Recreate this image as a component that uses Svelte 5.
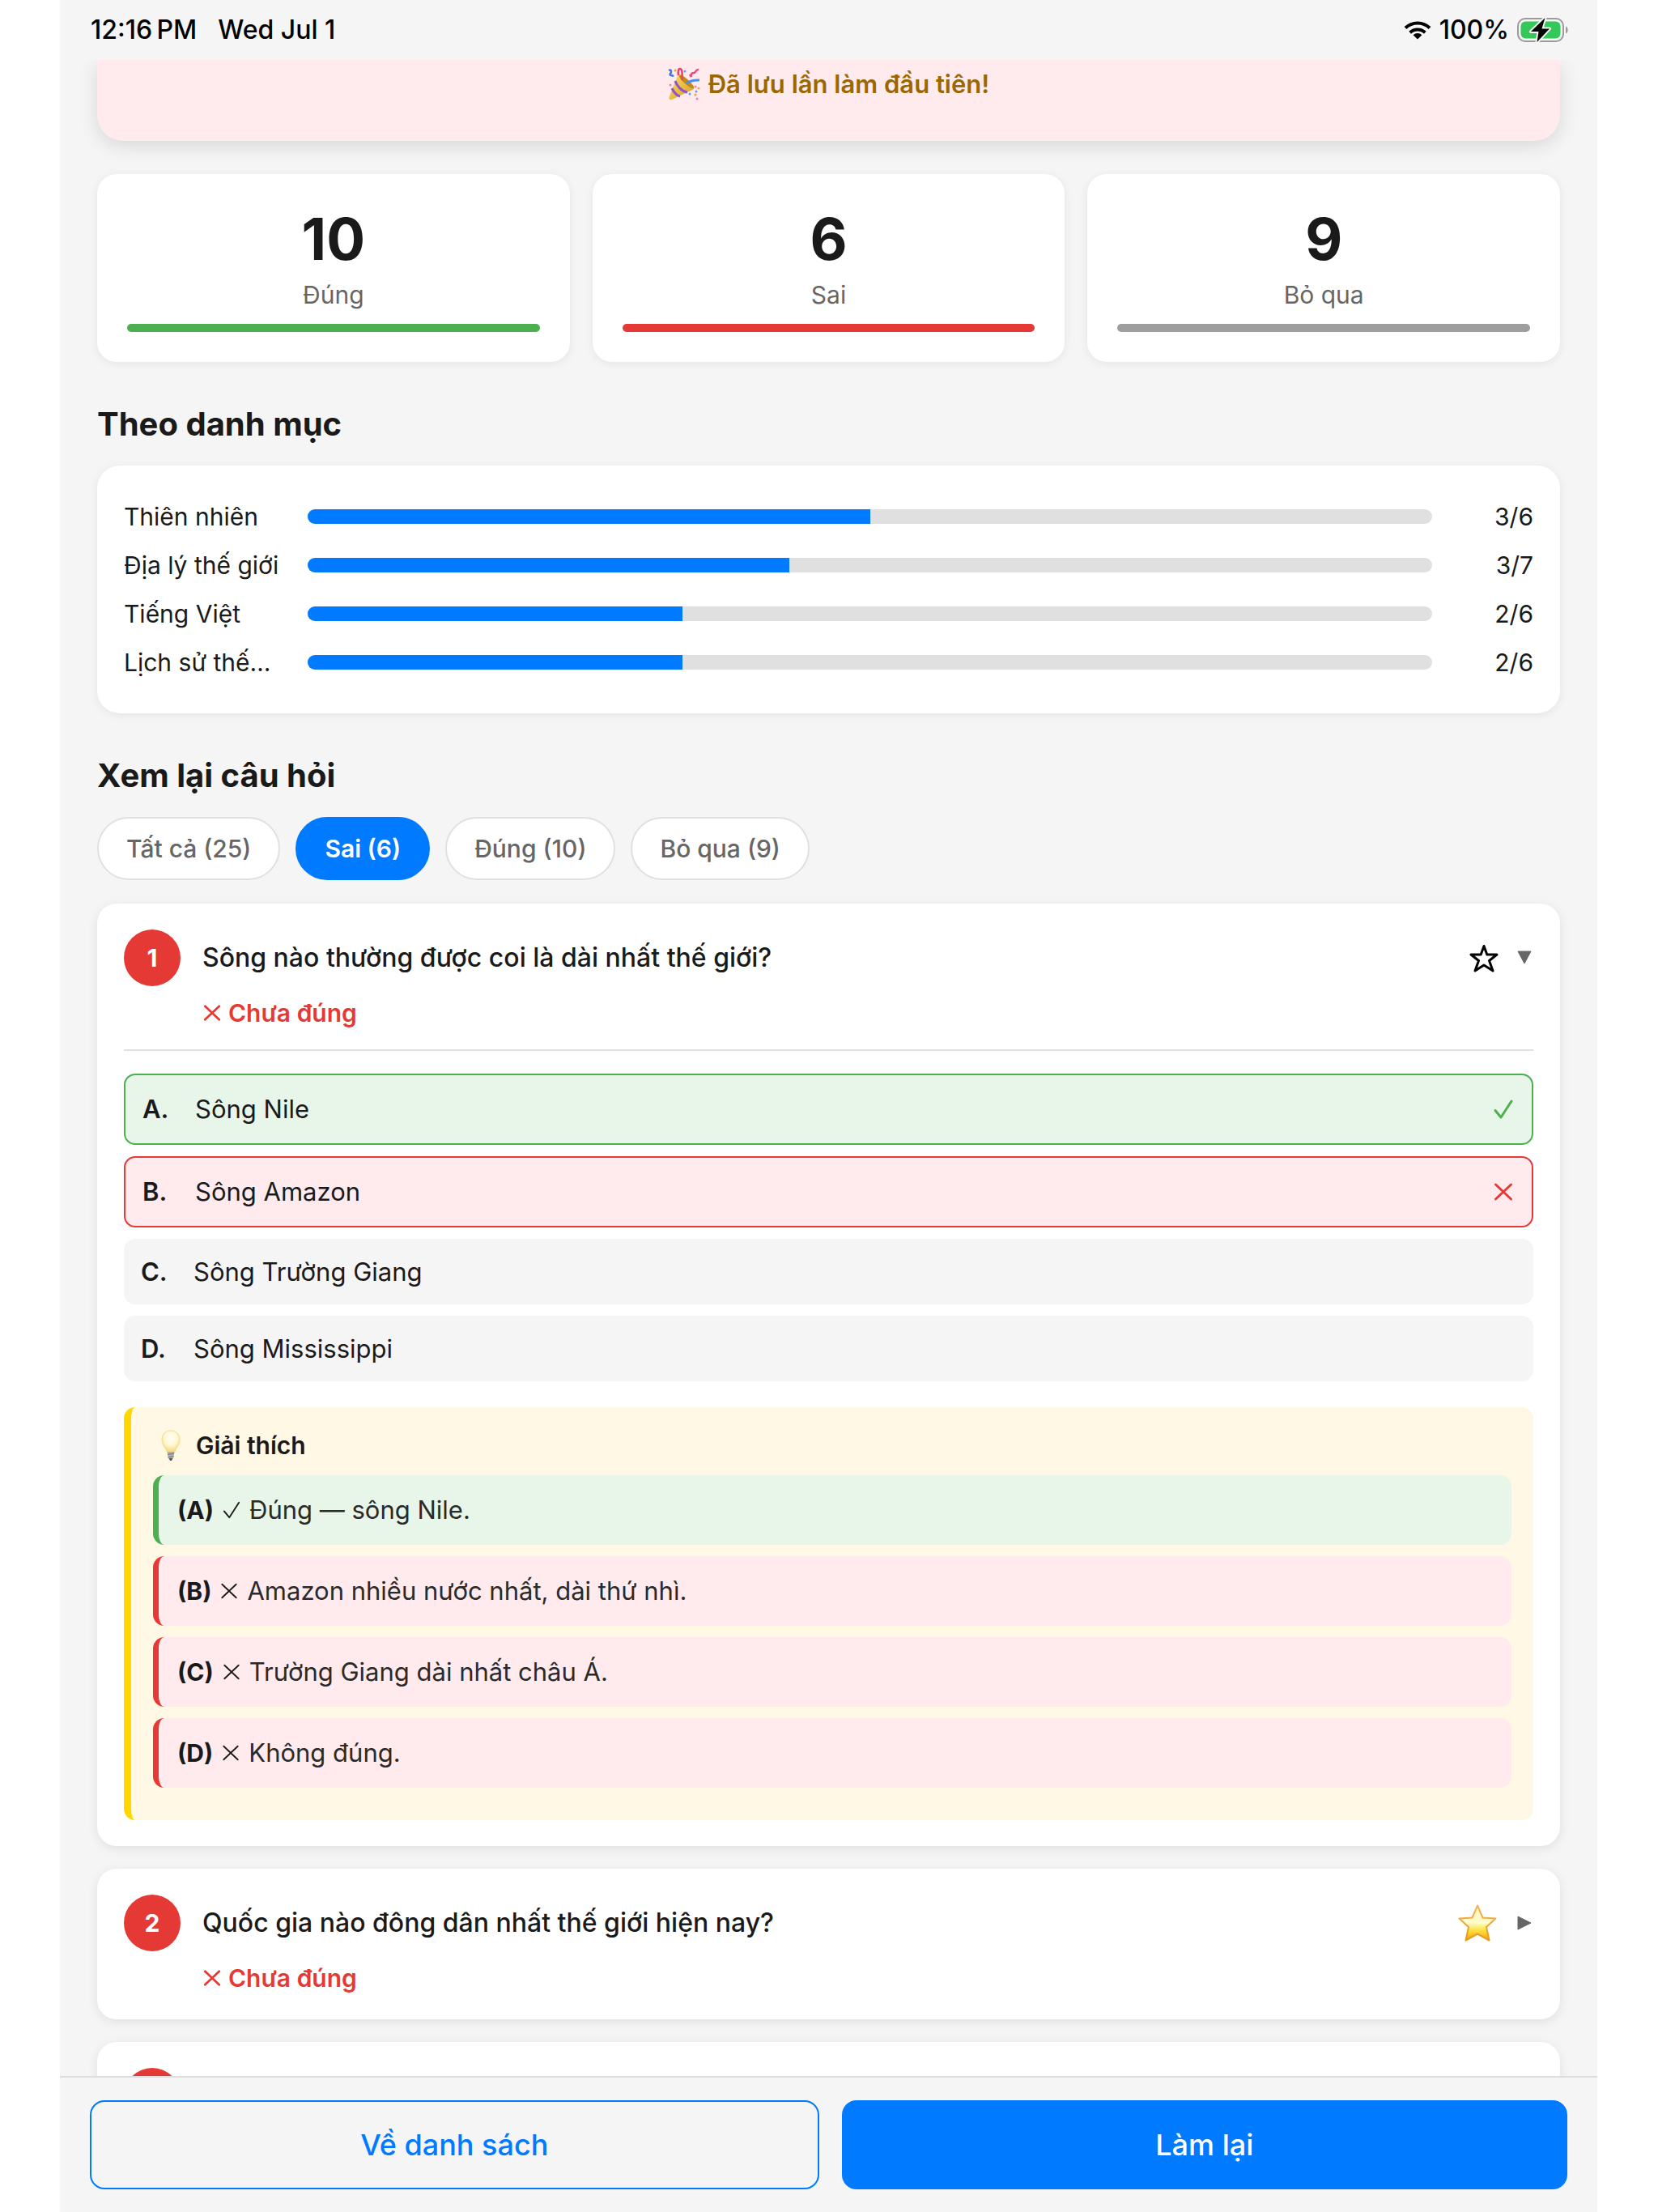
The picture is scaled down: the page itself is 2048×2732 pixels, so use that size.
<script>
  const stats = [
    { label: 'Đúng', value: 10, tone: 'good' },
    { label: 'Sai', value: 6, tone: 'bad' },
    { label: 'Bỏ qua', value: 9, tone: 'skip' },
  ]

  const categories = [
    { name: 'Thiên nhiên', right: 3, total: 6 },
    { name: 'Địa lý thế giới', right: 3, total: 7 },
    { name: 'Tiếng Việt', right: 2, total: 6 },
    { name: 'Lịch sử thế…', right: 2, total: 6 },
  ]

  const filters = [
    { id: 'all', label: 'Tất cả (25)' },
    { id: 'wrong', label: 'Sai (6)' },
    { id: 'right', label: 'Đúng (10)' },
    { id: 'skipped', label: 'Bỏ qua (9)' },
  ]

  let filter = $state('wrong')

  let questions = $state([
    {
      id: 1,
      title: 'Sông nào thường được coi là dài nhất thế giới?',
      starred: false,
      open: true,
      options: [
        { key: 'A', text: 'Sông Nile', mark: 'good' },
        { key: 'B', text: 'Sông Amazon', mark: 'bad' },
        { key: 'C', text: 'Sông Trường Giang' },
        { key: 'D', text: 'Sông Mississippi' },
      ],
      notes: [
        { key: 'A', ok: true, text: 'Đúng — sông Nile.' },
        { key: 'B', ok: false, text: 'Amazon nhiều nước nhất, dài thứ nhì.' },
        { key: 'C', ok: false, text: 'Trường Giang dài nhất châu Á.' },
        { key: 'D', ok: false, text: 'Không đúng.' },
      ],
    },
    {
      id: 2,
      title: 'Quốc gia nào đông dân nhất thế giới hiện nay?',
      starred: true,
      open: false,
      options: [],
      notes: [],
    },
  ])
</script>

{#snippet check()}
  <svg class="mark" viewBox="0 0 24 24" aria-hidden="true">
    <path d="M2 13.500 9 22 22 2" />
  </svg>
{/snippet}

{#snippet cross()}
  <svg class="mark" viewBox="0 0 24 24" aria-hidden="true">
    <path d="M2.500 3 21.500 21M21.500 3 2.500 21" />
  </svg>
{/snippet}

<div class="screen">
  <header class="status">
    <div class="clock">
      <span>12:16&#8198;PM</span>
      <span>Wed Jul 1</span>
    </div>
    <div class="power">
      <svg class="wifi" viewBox="0 0 34 24" aria-hidden="true">
        <path d="M2 9.500a21.500 21.500 0 0 1 30 0" />
        <path d="M7.700 15.200a13.300 13.300 0 0 1 18.600 0" />
        <path class="dot" d="M17 23.500 11.600 18.300a7.700 7.700 0 0 1 10.800 0z" />
      </svg>
      <span>100%</span>
      <svg class="battery" viewBox="0 0 64 32" aria-hidden="true">
        <rect x="1" y="2" width="56" height="28" rx="9" fill="none" stroke="#9b9b9b" stroke-width="2" />
        <path d="M60 11.500c3.500 1.500 3.500 7.500 0 9z" fill="#9b9b9b" />
        <rect x="4.500" y="5.500" width="49" height="21" rx="6" fill="#34c759" />
        <path
          d="M34.500 1 17 18h9.500L24.500 31 40 14.500h-9.500z"
          fill="#000"
          stroke="#f5f5f5"
          stroke-width="4"
          stroke-linejoin="round"
          paint-order="stroke"
        />
      </svg>
    </div>
  </header>

  <main>
    <div class="banner">
      <svg class="popper" viewBox="0 0 40 40" preserveAspectRatio="none" aria-hidden="true">
        <defs>
          <linearGradient id="cone" x1="0" y1="0" x2="1" y2="1">
            <stop offset="0" stop-color="#fbe36a" />
            <stop offset="1" stop-color="#d99a22" />
          </linearGradient>
        </defs>
        <path d="M13 7C19 8 31 19 32 26L5 39c-3 1-4-1-3.500-3z" fill="url(#cone)" />
        <ellipse cx="23" cy="17" rx="3" ry="12" transform="rotate(-48 23 17)" fill="#c08a1c" />
        <path d="M9 16c2 6 8 13 15 14M5 25c2 4 6 9 10 10" fill="none" stroke="#9350cf" stroke-width="3" />
        <path d="M17.500 15c0-6 1-13-2-14s-3 5-2.500 8" fill="none" stroke="#ef3f6d" stroke-width="2.500" />
        <path d="M23 19c4-3 8-4.500 16-4" fill="none" stroke="#4a90ea" stroke-width="3" />
        <path d="M1 3c3-2 4 2 2 4s3 3 4 2" fill="none" stroke="#3d78e0" stroke-width="2.500" />
        <path d="M38 2c-4-1-3 4-6 4s-4 2-3 5M27 8l2 3" fill="none" stroke="#ec4a78" stroke-width="2.500" />
        <g fill="#5aa3f0"><circle cx="21" cy="4" r="1.500" /><circle cx="27" cy="32" r="1.500" /><circle cx="35" cy="29" r="1.500" /></g>
        <g fill="#f2a33a"><circle cx="9" cy="3" r="1.500" /><circle cx="38" cy="25" r="1.500" /><circle cx="34" cy="33" r="1.500" /></g>
        <g fill="#ef7fa8"><circle cx="3" cy="21" r="1.500" /><circle cx="36" cy="38" r="1.500" /><circle cx="34" cy="23" r="1.500" /></g>
      </svg>
      <span>Đã lưu lần làm đầu tiên!</span>
    </div>

    <div class="stats">
      {#each stats as s (s.label)}
        <div class="stat">
          <strong>{s.value}</strong>
          <span>{s.label}</span>
          <i class={s.tone}></i>
        </div>
      {/each}
    </div>

    <h2>Theo danh mục</h2>
    <div class="categories">
      {#each categories as c (c.name)}
        <div class="category">
          <span class="cat-name">{c.name}</span>
          <div class="track">
            <div class="fill" style="width: {(c.right / c.total) * 100}%"></div>
          </div>
          <span class="score">{c.right}/{c.total}</span>
        </div>
      {/each}
    </div>

    <h2>Xem lại câu hỏi</h2>
    <div class="filters">
      {#each filters as f (f.id)}
        <button class="pill" class:on={filter === f.id} onclick={() => (filter = f.id)}>{f.label}</button>
      {/each}
    </div>

    <div class="questions">
      {#each questions as q (q.id)}
        <article class="question">
          <div class="qhead">
            <span class="num">{q.id}</span>
            <h3>{q.title}</h3>
            <button
              class="icon star"
              class:starred={q.starred}
              aria-label="Đánh dấu"
              aria-pressed={q.starred}
              onclick={() => (q.starred = !q.starred)}
            >
              {#if q.starred}
                <svg viewBox="0 0 48 46" aria-hidden="true">
                  <defs>
                    <linearGradient id="gold" x1="0" y1="0" x2="0" y2="1">
                      <stop offset="0" stop-color="#fff3c0" />
                      <stop offset="0.5" stop-color="#fffccb" />
                      <stop offset="0.72" stop-color="#fce03c" />
                      <stop offset="1" stop-color="#f5a210" />
                    </linearGradient>
                    <linearGradient id="rim" x1="0" y1="0" x2="0" y2="1">
                      <stop offset="0" stop-color="#f5b45c" />
                      <stop offset="1" stop-color="#e89a16" />
                    </linearGradient>
                  </defs>
                  <path
                    d="M24 1.500 30.500 16.500 46.500 17.500 35 28 38.500 44.500 24 36.500 9.500 44.500 13 28 1.500 17.500 17.500 16.500z"
                    fill="url(#gold)"
                    stroke="url(#rim)"
                    stroke-width="2"
                    stroke-linejoin="round"
                  />
                </svg>
              {:else}
                <svg viewBox="0 0 36 36" aria-hidden="true">
                  <path
                    d="M18 3.500 21.800 14 34 14 24.500 21.500 29 34 18 27 7 34 11.500 21.500 2 14 14.200 14z"
                    fill="none"
                    stroke="#000"
                    stroke-width="3"
                    stroke-linejoin="round"
                  />
                </svg>
              {/if}
            </button>
            <button
              class="icon chevron"
              class:closed={!q.open}
              aria-label="Mở rộng"
              aria-expanded={q.open}
              onclick={() => (q.open = !q.open)}
            >
              <svg viewBox="0 0 18 18" aria-hidden="true">
                {#if q.open}
                  <path d="M1 1h16L9 16z" />
                {:else}
                  <path d="M1 1v16L17 9z" />
                {/if}
              </svg>
            </button>
          </div>
          <p class="verdict">{@render cross()}Chưa đúng</p>

          {#if q.open}
            <div class="detail">
              <ul class="options">
                {#each q.options as o (o.key)}
                  <li class={['option', o.mark]}>
                    <b>{o.key}.</b>
                    <span>{o.text}</span>
                    {#if o.mark === 'good'}
                      {@render check()}
                    {:else if o.mark === 'bad'}
                      {@render cross()}
                    {/if}
                  </li>
                {/each}
              </ul>

              <section class="explain">
                <h4>
                  <svg class="bulb" viewBox="0 0 44 38" aria-hidden="true">
                    <defs>
                      <radialGradient id="glass" cx="0.5" cy="0.35" r="0.6">
                        <stop offset="0" stop-color="#fffef8" />
                        <stop offset="0.6" stop-color="#fff8d4" />
                        <stop offset="1" stop-color="#f8dd86" />
                      </radialGradient>
                    </defs>
                    <path
                      d="M22 1c7 0 11 5 11 11.500 0 6-4.500 9-6 14.500H17c-1.500-5.500-6-8.500-6-14.500C11 6 15 1 22 1z"
                      fill="url(#glass)"
                      stroke="#f6da88"
                      stroke-width="1"
                    />
                    <path d="M17.500 27h9l-1 7-2 3.500h-3l-2-3.500z" fill="#b4b4b4" />
                    <path d="M18 30.500l8-1.500M18.500 34l7-1.500" stroke="#848484" stroke-width="1.500" />
                    <path d="M20 35h4l-1 3h-2z" fill="#555" />
                  </svg>
                  Giải thích
                </h4>
                <ul class="notes">
                  {#each q.notes as n (n.key)}
                    <li class="note" class:ok={n.ok}>
                      <b>({n.key})</b>
                      {#if n.ok}
                        {@render check()}
                      {:else}
                        {@render cross()}
                      {/if}
                      <span>{n.text}</span>
                    </li>
                  {/each}
                </ul>
              </section>
            </div>
          {/if}
        </article>
      {/each}
      <article class="question">
        <div class="qhead"><span class="num"></span></div>
      </article>
    </div>
  </main>

  <footer>
    <button class="action outline">Về danh sách</button>
    <button class="action primary">Làm lại</button>
  </footer>
</div>

<style>
  :global(body) {
    background: #fff;
  }
  .screen {
    display: flex;
    flex-direction: column;
    height: 100vh;
    margin: 0 75px 0 74px;
    background: #f5f5f5;
    color: #1a1a1a;
    font-family: Inter, 'Noto Sans', sans-serif;
    font-size: 30px;
    line-height: 36px;
    overflow: hidden;
  }
  button {
    margin: 0;
    font: inherit;
    cursor: pointer;
  }
  h2,
  h3,
  h4,
  p,
  ul {
    margin: 0;
    padding: 0;
  }
  ul {
    list-style: none;
  }
  svg {
    display: block;
    flex: none;
  }

  .status {
    display: flex;
    justify-content: space-between;
    align-items: center;
    flex: none;
    height: 74px;
    padding: 0 35px 0 38px;
    box-sizing: border-box;
    color: #000;
    font-size: 32px;
    font-weight: 500;
  }
  .clock {
    display: flex;
    gap: 26px;
  }
  .power {
    display: flex;
    align-items: center;
    gap: 10px;
  }
  .wifi {
    width: 34px;
    height: 24px;
    fill: none;
    stroke: #000;
    stroke-width: 4;
  }
  .wifi .dot {
    fill: #000;
    stroke: none;
  }
  .battery {
    width: 64px;
    height: 32px;
  }

  main {
    flex: 1;
    min-height: 0;
    padding: 0 46px;
    overflow: hidden;
  }
  .banner {
    display: flex;
    justify-content: center;
    align-items: center;
    gap: 10px;
    padding: 10px 32px 50px;
    border-radius: 0 0 32px 32px;
    background: #ffebee;
    box-shadow: 0 6px 24px rgba(0, 0, 0, 0.12);
    color: #9a6700;
    font-size: 31px;
    font-weight: 600;
  }
  .popper {
    width: 40px;
    height: 40px;
  }

  .stats {
    display: flex;
    gap: 28px;
    margin-top: 41px;
  }
  .stat {
    flex: 1;
    display: flex;
    flex-direction: column;
    padding: 37px;
    border-radius: 24px;
    background: #fff;
    box-shadow: 0 2px 12px rgba(0, 0, 0, 0.07);
    text-align: center;
  }
  .stat strong {
    margin-bottom: 8px;
    font-size: 71px;
    font-weight: 700;
    line-height: 86px;
  }
  .stat span {
    margin-bottom: 18px;
    color: #666;
  }
  .stat i {
    height: 10px;
    border-radius: 5px;
  }
  i.good {
    background: #4caf50;
  }
  i.bad {
    background: #e53935;
  }
  i.skip {
    background: #9e9e9e;
  }

  h2 {
    margin: 52px 0 26px;
    font-size: 40px;
    font-weight: 700;
    line-height: 50px;
  }
  .categories {
    display: flex;
    flex-direction: column;
    gap: 24px;
    padding: 45px 33px;
    border-radius: 28px;
    background: #fff;
    box-shadow: 0 2px 12px rgba(0, 0, 0, 0.07);
  }
  .category {
    display: flex;
    align-items: center;
    gap: 18px;
  }
  .cat-name {
    width: 209px;
    white-space: nowrap;
  }
  .track {
    flex: 1;
    height: 18px;
    border-radius: 9px;
    background: #e0e0e0;
    overflow: hidden;
  }
  .fill {
    height: 100%;
    background: #007aff;
  }
  .score {
    width: 107px;
    text-align: right;
  }

  .filters {
    display: flex;
    flex-wrap: wrap;
    gap: 19px;
    margin-bottom: 29px;
  }
  .pill {
    padding: 19px 34px;
    border: 2px solid #e0e0e0;
    border-radius: 39px;
    background: #fff;
    color: #666;
    font-weight: 500;
  }
  .pill.on {
    border-color: #007aff;
    background: #007aff;
    color: #fff;
    font-weight: 600;
  }

  .questions {
    display: flex;
    flex-direction: column;
    gap: 28px;
  }
  .question {
    padding: 32px 33px;
    border-radius: 24px;
    background: #fff;
    box-shadow: 0 3px 14px rgba(0, 0, 0, 0.09);
  }
  .qhead {
    display: flex;
    align-items: center;
  }
  .num {
    display: flex;
    align-items: center;
    justify-content: center;
    width: 70px;
    height: 70px;
    margin-right: 27px;
    border-radius: 50%;
    background: #e53935;
    color: #fff;
    font-weight: 700;
  }
  h3 {
    flex: 1;
    font-size: 32px;
    font-weight: 500;
    line-height: 44px;
  }
  .icon {
    padding: 0;
    border: 0;
    background: none;
  }
  .star svg {
    width: 36px;
    height: 36px;
  }
  .star.starred {
    margin-right: 2px;
  }
  .star.starred svg {
    width: 48px;
    height: 46px;
  }
  .chevron {
    margin: 0 2px 0 23px;
  }
  .chevron svg {
    width: 18px;
    height: 18px;
    fill: #666;
    stroke: #666;
    stroke-width: 1;
    stroke-linejoin: round;
  }
  .mark {
    width: 24px;
    height: 24px;
    fill: none;
    stroke: currentColor;
    stroke-width: 2;
    stroke-linecap: round;
    stroke-linejoin: round;
  }
  .verdict {
    display: flex;
    align-items: center;
    gap: 9px;
    margin: 14px 0 0 98px;
    color: #e53935;
    font-weight: 600;
    line-height: 38px;
  }
  .verdict .mark {
    width: 22px;
    height: 22px;
    stroke-width: 3;
  }

  .detail {
    margin-top: 26px;
    padding-top: 28px;
    border-top: 2px solid #e0e0e0;
  }
  .options {
    display: flex;
    flex-direction: column;
    gap: 14px;
    font-size: 31px;
  }
  .option {
    display: flex;
    align-items: center;
    min-height: 81px;
    padding: 0 23px 0 21px;
    border-radius: 14px;
    background: #f5f5f5;
  }
  .option b {
    width: 65px;
    font-weight: 600;
  }
  .option span {
    flex: 1;
  }
  .option.good,
  .option.bad {
    min-height: 84px;
    border: 2px solid;
  }
  .option.good {
    border-color: #4caf50;
    background: #e8f5e9;
  }
  .option.bad {
    border-color: #e53935;
    background: #ffebee;
  }
  .option .mark {
    stroke-width: 3;
  }
  .good .mark {
    color: #4caf50;
  }
  .bad .mark {
    color: #e53935;
  }

  .explain {
    margin-top: 32px;
    padding: 28px 27px 40px;
    border-left: 9px solid #ffd700;
    border-radius: 14px;
    background: #fff8e5;
  }
  h4 {
    display: flex;
    align-items: center;
    gap: 9px;
    margin-bottom: 18px;
    font-size: 30px;
    font-weight: 600;
    line-height: 38px;
  }
  .bulb {
    width: 44px;
    height: 38px;
  }
  .notes {
    display: flex;
    flex-direction: column;
    gap: 14px;
  }
  .note {
    display: flex;
    align-items: center;
    gap: 11px;
    padding: 25px 23px;
    border-left: 7px solid #e53935;
    border-radius: 14px;
    background: #ffebee;
  }
  .note.ok {
    border-left-color: #4caf50;
    background: #e8f5e9;
  }
  .note b {
    font-weight: 700;
  }
  .note .mark {
    width: 22px;
    height: 22px;
  }
  .note span {
    color: #2a2a2a;
    font-size: 31px;
  }

  footer {
    display: flex;
    flex: none;
    gap: 28px;
    padding: 28px 37px;
    border-top: 2px solid #ddd;
    background: #f5f5f5;
  }
  .action {
    flex: 1;
    height: 110px;
    padding: 0 32px;
    border: 0;
    border-radius: 18px;
    font-size: 36px;
    font-weight: 500;
  }
  .outline {
    border: 2px solid #007aff;
    background: transparent;
    color: #007aff;
  }
  .primary {
    background: #007aff;
    color: #fff;
  }
</style>
